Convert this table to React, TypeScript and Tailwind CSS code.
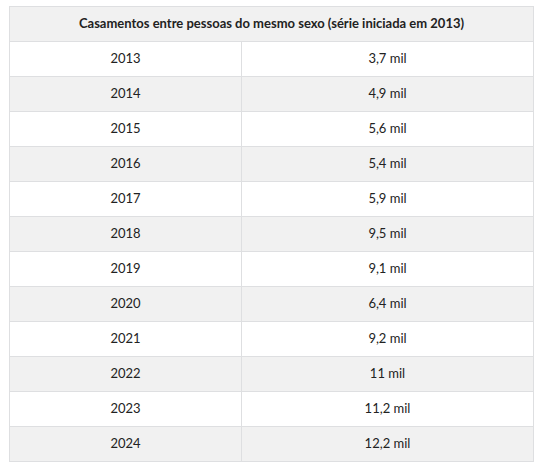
import React from "react";

const rows: [string, string][] = [
  ["2013", "3,7 mil"],
  ["2014", "4,9 mil"],
  ["2015", "5,6 mil"],
  ["2016", "5,4 mil"],
  ["2017", "5,9 mil"],
  ["2018", "9,5 mil"],
  ["2019", "9,1 mil"],
  ["2020", "6,4 mil"],
  ["2021", "9,2 mil"],
  ["2022", "11 mil"],
  ["2023", "11,2 mil"],
  ["2024", "12,2 mil"],
];

export default function App() {
  return (
    <div className="bg-white w-[542px] h-[467px] pt-[6px] pl-[9px]" style={{ fontFamily: "Lato, 'Open Sans', sans-serif" }}>
      <table className="w-[525px] border-collapse text-[13px] text-[#222]">
        <thead>
          <tr className="bg-[#f1f1f1]">
            <th colSpan={2} className="h-[35px] border border-[#dedfe1] font-bold text-center p-0">
              Casamentos entre pessoas do mesmo sexo (série iniciada em 2013)
            </th>
          </tr>
        </thead>
        <tbody>
          {rows.map(([y, v], i) => (
            <tr key={y} className={i % 2 === 1 ? "bg-[#f1f1f1]" : "bg-white"}>
              <td className="h-[35px] w-[232px] border border-[#dedfe1] text-center p-0">{y}</td>
              <td className="h-[35px] border border-[#dedfe1] text-center p-0">{v}</td>
            </tr>
          ))}
        </tbody>
      </table>
    </div>
  );
}
